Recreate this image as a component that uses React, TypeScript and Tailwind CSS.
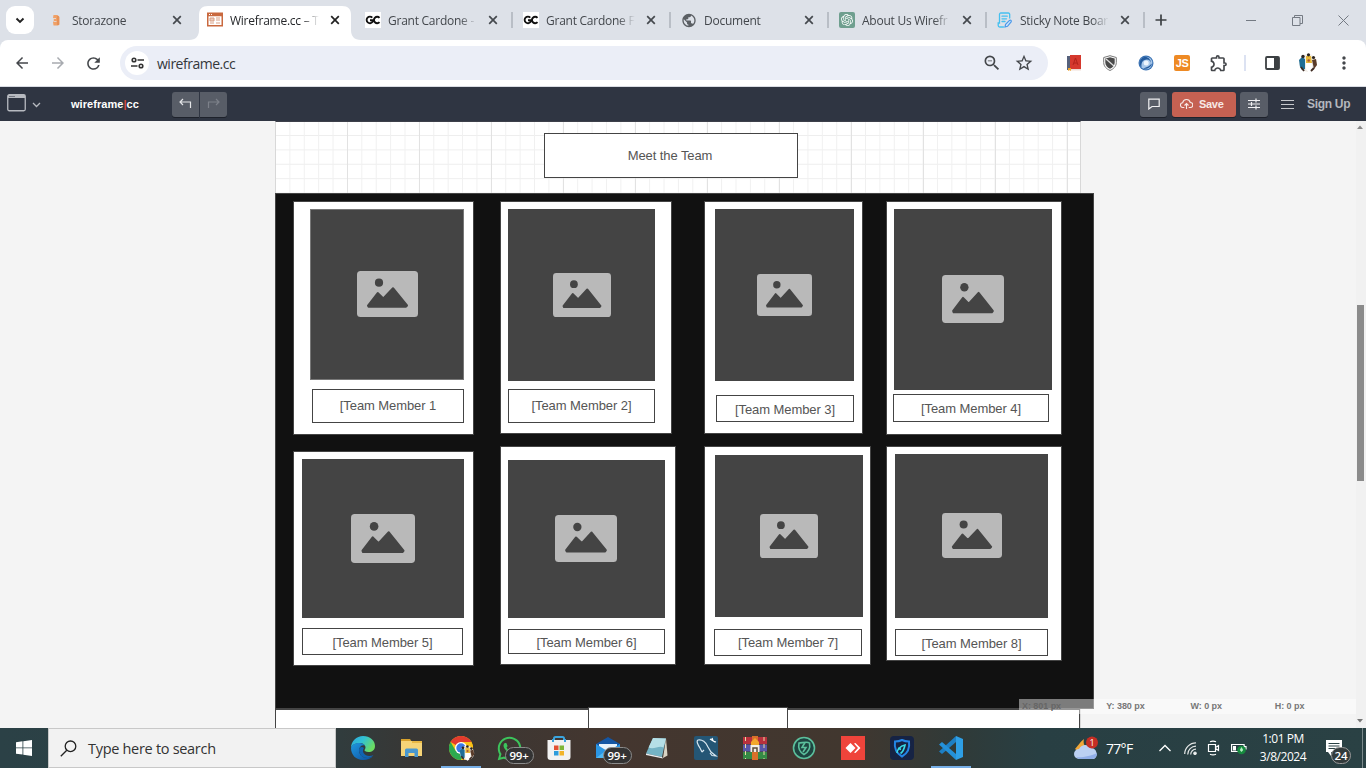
import React from "react";
import { MdArrowBack, MdArrowForward, MdRefresh, MdZoomOut, MdStarBorder, MdOutlineExtension, MdMoreVert, MdPublic } from "react-icons/md";
import { SiOpenai } from "react-icons/si";
import { FaWhatsapp } from "react-icons/fa";

const UI = "font-['Open_Sans','Noto_Sans',sans-serif]";
const ARIAL = "font-['Liberation_Sans',Arial,sans-serif]";

/* ---------- browser tabs ---------- */

function ShopIcon() {
  return (
    <svg width="16" height="16" viewBox="0 0 16 16">
      <path d="M4.500 3h4L10.500 5v7.500l-1.500 1H4.500L4 10l1-2-1-2z" fill="#f0a066" />
      <path d="M4 6.500h3M4.500 9.500h3" stroke="#dfe3e8" strokeWidth=".8" />
      <path d="M9 4v9" stroke="#e0894f" strokeWidth="1.300" />
    </svg>
  );
}

function WireIcon() {
  return (
    <svg width="16" height="16" viewBox="0 0 16 16">
      <rect x=".75" y="1.250" width="14.500" height="12.500" fill="#fff" stroke="#c9693f" strokeWidth="1.500" />
      <path d="M0 3h16" stroke="#c9693f" strokeWidth="2.500" />
      <path d="M2 2.500h1M4 2.500h1" stroke="#fff" />
      <path d="M3 6h4v3H3zM9 6h4M9 8h4M3 11h4M9 11h4" stroke="#d99f84" fill="#eccdbf" />
    </svg>
  );
}

function GcIcon() {
  return (
    <svg width="16" height="16" viewBox="0 0 16 16">
      <rect width="16" height="16" fill="#fff" />
      <path d="M7.300 5.600A3.300 3.300 0 1 0 7.500 10V8.300H5M14.500 5.800a3.200 3.200 0 1 0 0 4.400" fill="none" stroke="#111" strokeWidth="1.900" />
    </svg>
  );
}

function GptIcon() {
  return (
    <span className="flex size-4 items-center justify-center rounded-[2px] bg-[#6f9f8f] text-white">
      <SiOpenai size={12} />
    </span>
  );
}

function NoteIcon() {
  return (
    <svg width="16" height="16" viewBox="0 0 16 16" fill="none" stroke="#45c0f0" strokeWidth="1.300" strokeLinecap="round">
      <path d="M12.700 6V2.300A1.300 1.300 0 0 0 11.400 1H3.800a1.300 1.300 0 0 0-1.300 1.300V11H1.200v2.500A1.500 1.500 0 0 0 2.700 15H6.500" />
      <path d="M5 4.200h5.300M5 6.800h4.500M5 9.500h3" />
      <path d="M8 15l.6-2.700 3.900-3.900c1.200-.8 2.300.3 1.600 1.500L10.500 14.300z" stroke="#4a98ea" fill="#cfe6fb" strokeWidth="1.200" />
    </svg>
  );
}

const TABS = [
  { title: "Storazone", icon: <ShopIcon />, sep: false, active: false },
  { title: "Wireframe.cc – T", icon: <WireIcon />, sep: false, active: true },
  { title: "Grant Cardone -", icon: <GcIcon />, sep: true, active: false },
  { title: "Grant Cardone F", icon: <GcIcon />, sep: true, active: false },
  { title: "Document", icon: <MdPublic size={17} className="text-[#5b5f64]" />, sep: true, active: false },
  { title: "About Us Wirefr", icon: <GptIcon />, sep: true, active: false },
  { title: "Sticky Note Boar", icon: <NoteIcon />, sep: true, active: false },
];

function TabStrip() {
  return (
    <div className="flex h-10 shrink-0 bg-[#dde1e8]">
      <div className="ml-[6px] mt-[6px] flex size-7 items-center justify-center rounded-[9px] bg-white">
        <svg width="10" height="7" viewBox="0 0 10 7" fill="none" stroke="#222" strokeWidth="1.900">
          <path d="M1.500 1.500L5 5l3.500-3.500" />
        </svg>
      </div>
      <div className="ml-[7px] flex">
        {TABS.map((t, i) => (
          <div key={i} className="relative flex h-10 w-[158px] items-center">
            {t.active && (
              <svg className="absolute left-[-10px] top-[6px]" width="172" height="34" viewBox="0 0 172 34">
                <path d="M0 34c7 0 10-4 10-10V9C10 3 13 0 19 0h134c6 0 9 3 9 9v15c0 6 3 10 10 10z" fill="#fff" />
              </svg>
            )}
            <div className="relative flex w-full items-center pl-[8px]">
              <span className="flex w-4 shrink-0 items-center justify-center">{t.icon}</span>
              <span
                className={`${UI} ml-[7px] w-[94px] shrink-0 whitespace-nowrap pt-px text-[12px] leading-4 tracking-[-0.25px] ${t.active ? "text-[#26282b]" : "text-[#43474c]"} [mask-image:linear-gradient(to_right,black_72px,transparent_89px)]`}
              >
                {t.title}
              </span>
              <svg className="ml-[6px] shrink-0" width="10" height="10" viewBox="0 0 10 10" stroke={t.active ? "#222" : "#45494e"} strokeWidth="1.700">
                <path d="M1.200 1.200l7.600 7.600M8.800 1.200L1.200 8.800" />
              </svg>
              {t.sep && <span className="ml-[13px] h-4 w-[1.500px] bg-[#b9bec6]" />}
            </div>
          </div>
        ))}
      </div>
      <svg className="ml-[8px] mt-[14px]" width="12" height="12" viewBox="0 0 12 12" stroke="#3c4043" strokeWidth="1.700">
        <path d="M6 .5v11M.5 6h11" />
      </svg>
      <div className="ml-auto mr-[17px] flex items-center gap-[35px] text-[#747a83]">
        <svg width="11" height="10" viewBox="0 0 11 10" stroke="currentColor"><path d="M0 5.500h10" /></svg>
        <svg width="11" height="11" viewBox="0 0 11 11" stroke="currentColor" fill="none"><path d="M.5 2.500h7.500v8H.5zM2.500 2.500v-2h8v8H8" /></svg>
        <svg width="11" height="11" viewBox="0 0 11 11" stroke="currentColor"><path d="M.5.5l10 10M10.500.5l-10 10" /></svg>
      </div>
    </div>
  );
}

/* ---------- browser toolbar ---------- */

function Avatar({ size }: { size: number }) {
  return (
    <svg width={size} height={size} viewBox="0 0 20 20">
      <rect x="1" y="1" width="18" height="18" rx="9" fill="#f2eee8" />
      <path d="M1 7l3-3 3 2v10l-3 1-2-3z" fill="#1f6e96" />
      <path d="M8 3h5l1 7H8z" fill="#e8b93a" />
      <path d="M14 7l4-1 1 6-3 4z" fill="#5a3c2a" />
      <path d="M8 10h6v5l-3 5-3-4z" fill="#fff" />
      <path d="M3 14l3 4M16 15l-3 3" stroke="#3d2a22" strokeWidth="1.800" />
      <circle cx="5" cy="3.500" r="1.700" fill="#2a2320" />
      <circle cx="10.500" cy="1.800" r="1.600" fill="#2a2320" />
      <circle cx="15.500" cy="4.500" r="1.600" fill="#2a2320" />
      <circle cx="10.700" cy="7.500" r="1.300" fill="#a8563a" />
    </svg>
  );
}

function Toolbar() {
  return (
    <div className="h-[47px] shrink-0 bg-[#dde1e8]">
      <div className="flex h-[47px] items-center rounded-t-[8px] border-b border-[#d9dce3] bg-white text-[#44474b]">
        <div className="flex items-center gap-[18px] pl-[13px]">
          <MdArrowBack size={18} />
          <MdArrowForward size={18} className="text-[#a8abb0]" />
          <MdRefresh size={19} className="ml-[-1px]" />
        </div>
        <div className="ml-[17px] flex h-[34px] w-[928px] items-center rounded-full bg-[#ebeef7] pl-[5px] pr-[14px]">
          <span className="flex size-6 items-center justify-center rounded-full bg-white">
            <svg width="13" height="12" viewBox="0 0 13 12" fill="none" stroke="#333" strokeWidth="1.600">
              <circle cx="3" cy="3" r="1.800" /><path d="M6.500 3H13M0 9h6.500" /><circle cx="10" cy="9" r="1.800" />
            </svg>
          </span>
          <span className={`${UI} ml-2 text-[14px] tracking-[-0.5px] text-[#34373b]`}>wireframe.cc</span>
          <MdZoomOut size={20} className="ml-auto" />
          <MdStarBorder size={20} className="ml-[12px]" />
        </div>
        <div className="ml-[19px] flex items-center">
          <svg width="14" height="16" viewBox="0 0 14 16">
            <path d="M0 1h3v14H0z" fill="#56617b" /><path d="M3 0h11v14H3z" fill="#d5382d" />
            <path d="M2 14h12v1.500H2z" fill="#f0ded6" /><path d="M1 13h3v3l-1.500-1L1 16z" fill="#f1a52a" />
            <path d="M6 10l2.500-7L11 10M7 8h3" stroke="#b2231b" fill="none" />
          </svg>
          <svg className="ml-[22px]" width="14" height="16" viewBox="0 0 14 16">
            <path d="M7 .7l6.300 1.800v5c0 4-3 6.500-6.300 8C3.700 14 .7 11.500.7 7.500v-5z" fill="#fff" stroke="#777" />
            <path d="M7 2.300l4.700 1.200v4c0 3-2 5-4.700 6.200C4.300 12.500 2.300 10.500 2.300 7.500v-4z" fill="#4a4a4a" />
            <path d="M3 4l8 7" stroke="#ddd" strokeWidth="1.300" />
          </svg>
          <svg className="ml-[21px]" width="16" height="16" viewBox="0 0 16 16">
            <circle cx="8" cy="8" r="7.500" fill="#3a72b4" /><circle cx="8" cy="8" r="6.300" fill="#a9c8ea" />
            <path d="M8 1.700A6.300 6.300 0 0 0 3.500 12.500C3 7 5 5 9 4.500a4 4 0 0 1 3 6.500A6.300 6.300 0 0 0 8 1.700z" fill="#245c9f" />
            <path d="M5 13.500c4 1 8-1 9-5-2 2-5 4-9 5z" fill="#245c9f" />
            <circle cx="8.200" cy="8" r="2.500" fill="#eef5fd" />
          </svg>
          <span className={`${ARIAL} ml-[20px] flex size-4 items-center justify-center rounded-[2px] bg-[#ee8a24] text-[11px] font-bold tracking-[-0.5px] text-white`}>JS</span>
          <MdOutlineExtension size={20} className="ml-[19px]" />
          <span className="ml-[15px] h-4 w-[2px] bg-[#dce2f2]" />
          <svg className="ml-[19px]" width="15" height="14" viewBox="0 0 15 14">
            <rect x="1" y="1" width="13" height="12" rx="1" fill="none" stroke="#3c4043" strokeWidth="1.800" /><path d="M9 1h5v12H9z" fill="#3c4043" />
          </svg>
          <span className="ml-[18px]"><Avatar size={20} /></span>
          <MdMoreVert size={20} className="ml-[16px]" />
        </div>
      </div>
    </div>
  );
}

/* ---------- editor bar ---------- */

function EditorBar() {
  const btn = "flex h-[25px] items-center justify-center bg-[#585d67] shadow-[0_1px_0_#1e222b]";
  return (
    <div className={`${ARIAL} flex h-[34px] shrink-0 items-center bg-[#2f3542] font-bold`}>
      <svg className="ml-[7px] mt-[-2px]" width="19" height="18" viewBox="0 0 19 18">
        <rect x=".75" y=".75" width="17.500" height="16" rx="1.500" fill="none" stroke="#b7bac0" strokeWidth="1.300" />
        <path d="M1 1h17v3H1z" fill="#b7bac0" /><path d="M2.500 2.500h1M4.500 2.500h1M6.500 2.500h1" stroke="#2f3542" />
      </svg>
      <svg className="ml-[6px] mt-[2px]" width="9" height="6" viewBox="0 0 9 6" fill="none" stroke="#b7bac0" strokeWidth="1.300"><path d="M1 1l3.500 3.500L8 1" /></svg>
      <span className="ml-[30px] w-[101px] text-[11px] tracking-[0.05px] text-white">wireframe<span className="text-[#d9493d]">|</span>cc</span>
      <div className="flex gap-px">
        <div className={`${btn} w-[27px] rounded-l-[3px]`}>
          <svg width="13" height="12" viewBox="0 0 13 12" fill="none" stroke="#e4e5e8" strokeWidth="1.200"><path d="M4 1L1 4l3 3M1 4h10.500v6" /></svg>
        </div>
        <div className={`${btn} w-[27px] rounded-r-[3px]`}>
          <svg width="13" height="12" viewBox="0 0 13 12" fill="none" stroke="#7d818a" strokeWidth="1.200"><path d="M9 1l3 3-3 3M12 4H1.500v6" /></svg>
        </div>
      </div>
      <div className="ml-auto flex items-center">
        <div className={`${btn} w-[27px] rounded-[3px]`}>
          <svg width="12" height="12" viewBox="0 0 12 12" fill="none" stroke="#f0f0f2" strokeWidth="1.200"><path d="M.8 1.200h10.400v7.300H4L.8 11z" /></svg>
        </div>
        <div className="ml-[5px] flex h-[25px] w-[64px] items-center rounded-[3px] bg-[#c56152] pl-[8px] text-[11px] text-[#f7e9e6] shadow-[0_1px_0_#1e222b]">
          <svg className="shrink-0" width="13" height="12" viewBox="0 0 13 12" fill="none" stroke="currentColor" strokeWidth="1.100"><path d="M4.300 9.500H3A2.400 2.400 0 0 1 2.700 4.700 3.900 3.900 0 0 1 10.300 4.500a2.500 2.500 0 0 1 0 5H8.700M6.500 11V5.500M4.500 7.500l2-2 2 2" /></svg>
          <span className="ml-[6px] tracking-[-0.3px]">Save</span>
        </div>
        <div className={`${btn} ml-[4px] w-[28px] rounded-[3px]`}>
          <svg width="12" height="12" viewBox="0 0 12 12" stroke="#f0f0f2" strokeWidth="1.200"><path d="M0 2.500h12M0 6h12M0 9.500h12M8 .5v4M3.500 4v4M8 7.500v4" /></svg>
        </div>
        <svg className="ml-[13px]" width="13" height="11" viewBox="0 0 13 11" stroke="#c6c8cc" strokeWidth="1.200"><path d="M0 1.500h13M0 5.500h13M0 9.500h13" /></svg>
        <span className="ml-[13px] w-[59px] whitespace-nowrap text-[12px] tracking-[-0.3px] text-[#b4b7bd]">Sign Up</span>
      </div>
    </div>
  );
}

/* ---------- drawing canvas ---------- */

type Box = [left: number, top: number, right: number, bottom: number];

const ORIGIN_Y = 121;
const place = ([l, t, r, b]: Box): React.CSSProperties => ({ left: l, top: t - ORIGIN_Y, width: r - l, height: b - t });

const MEMBERS: { card: Box; photo: Box; icon: Box; label: Box; text: string; edge?: boolean; low?: boolean }[] = [
  { card: [293, 201, 474, 435], photo: [310, 209, 464, 380], icon: [357, 271, 418, 317], label: [312, 389, 464, 423], text: "[Team Member 1", edge: true },
  { card: [500, 201, 672, 434], photo: [508, 209, 655, 381], icon: [553, 273, 611, 317], label: [508, 389, 655, 423], text: "[Team Member 2]" },
  { card: [704, 201, 863, 434], photo: [715, 209, 854, 381], icon: [757, 274, 812, 316], label: [716, 395, 854, 422], text: "[Team Member 3]", low: true },
  { card: [886, 201, 1062, 435], photo: [894, 209, 1052, 390], icon: [942, 275, 1004, 323], label: [893, 394, 1049, 422], text: "[Team Member 4]", low: true },
  { card: [293, 451, 474, 666], photo: [302, 459, 464, 618], icon: [351, 514, 415, 563], label: [302, 628, 463, 655], text: "[Team Member 5]", low: true },
  { card: [500, 446, 676, 665], photo: [508, 460, 665, 618], icon: [555, 515, 617, 562], label: [508, 629, 665, 654], text: "[Team Member 6]", low: true },
  { card: [704, 446, 871, 665], photo: [715, 455, 863, 617], icon: [760, 514, 818, 558], label: [714, 629, 862, 656], text: "[Team Member 7]" },
  { card: [886, 446, 1062, 661], photo: [895, 454, 1048, 618], icon: [942, 513, 1002, 558], label: [895, 629, 1048, 656], text: "[Team Member 8]", low: true },
];

function Canvas() {
  return (
    <div className={`${ARIAL} relative min-h-0 flex-1 overflow-hidden bg-[#f4f4f4] text-[13px] tracking-[-0.08px] text-[#555]`}>
      <div className="absolute bottom-0 left-[275px] top-0 w-[806px] border-x border-t border-x-[#d8d8d8] border-t-[#3d404a] bg-white bg-[linear-gradient(to_right,#e2e2e2_1px,transparent_1px),linear-gradient(to_right,#f0f0f0_1px,transparent_1px),linear-gradient(to_bottom,#eeeeee_1px,transparent_1px)] bg-[length:72px_100%,14.4px_100%,100%_14.4px] bg-[position:-1px_0,-1px_0,0_13px]" />
      <div className="absolute flex items-center justify-center border border-[#444] bg-white pr-[2px]" style={place([544, 133, 798, 178])}>Meet the Team</div>
      <div className="absolute border border-[#444] bg-[#111]" style={place([275, 193, 1094, 709])} />
      {MEMBERS.map((m) => (
        <React.Fragment key={m.text}>
          <div className="absolute border border-[#444] bg-white" style={place(m.card)} />
          <div className={`absolute border bg-[#444] ${m.edge ? "border-[#777]" : "border-[#444]"}`} style={place(m.photo)} />
          <svg className="absolute" style={place(m.icon)} viewBox="0 0 61 46" preserveAspectRatio="none">
            <rect width="61" height="46" rx="3.500" fill="#b9b9b9" />
            <circle cx="22" cy="11.700" r="4.100" fill="#444" />
            <path d="M11 34.500L20.700 22l5.600 5.500L36 17.200l14 17.300-1 1.200H11.500z" fill="#444" stroke="#444" strokeWidth="2" strokeLinejoin="round" />
          </svg>
          <div className={`absolute flex items-center justify-center whitespace-nowrap border border-[#444] bg-white ${m.low ? "pt-[2px]" : ""}`} style={place(m.label)}>{m.text}</div>
        </React.Fragment>
      ))}
      <div className="absolute border-l border-t-2 border-[#444] bg-white" style={place([275, 708, 589, 730])} />
      <div className="absolute border-r border-t-2 border-[#444] bg-white" style={place([787, 708, 1080, 730])} />
      <div className="absolute border-x border-t border-[#444] bg-white" style={place([588, 707, 788, 730])} />
      <div className="absolute grid grid-cols-4 items-center bg-white/45 pl-[3px] text-[9px] font-bold tracking-[-0.05px] text-[#777]" style={place([1019, 699, 1359, 714])}>
        <span className="text-[#666]">X: 801 px</span><span>Y: 380 px</span><span>W: 0 px</span><span>H: 0 px</span>
      </div>
      <div className="absolute bottom-0 right-0 top-0 flex w-[10px] flex-col items-center bg-[#f1f1f1]">
        <svg className="ml-[-2px] mt-[4px]" width="6" height="4" viewBox="0 0 6 4"><path d="M0 4l3-3.500L6 4z" fill="#888" /></svg>
        <div className="ml-[-1px] mt-[176px] h-[176px] w-[7px] bg-[#8b8b8b]" />
        <svg className="mb-[5px] ml-[-2px] mt-auto" width="6" height="4" viewBox="0 0 6 4"><path d="M0 0l3 3.500L6 0z" fill="#777" /></svg>
      </div>
    </div>
  );
}

/* ---------- taskbar ---------- */

function Badge({ text }: { text: string }) {
  return (
    <span className={`${UI} absolute left-[7px] top-[8px] flex h-[17px] w-[29px] items-center justify-center rounded-full border border-[#8b8b8b] bg-[#333333] text-[11.500px] font-semibold tracking-[-0.3px] text-white`}>
      {text}
    </span>
  );
}

function EdgeIcon() {
  return (
    <svg width="24" height="24" viewBox="0 0 24 24">
      <defs>
        <linearGradient id="edgeTop" x1="0" y1="0" x2="1" y2=".5"><stop offset="0" stopColor="#2ba6dc" /><stop offset=".5" stopColor="#32c2d4" /><stop offset="1" stopColor="#6bdc62" /></linearGradient>
        <linearGradient id="edgeLow" x1="0" y1="0" x2="1" y2="1"><stop offset="0" stopColor="#1f98e0" /><stop offset="1" stopColor="#0d4f9e" /></linearGradient>
      </defs>
      <path d="M0 12C0 5 5.500 0 12 0c7 0 12 4.500 12 10 0 4-3 6-6.500 6-3 0-4-1-4-1.700 0-.8 1-1.200 1-3C14.500 9 12 7 8.500 7 4 7 .5 9.500 0 12z" fill="url(#edgeTop)" />
      <path d="M0 12c.5-3 4-5 8.500-5 2.500 0 4.500 1 5.500 2.500-3-1-6 1-6 5 0 4 3.500 7.500 8.500 7.500 2 0 4-1 5.500-2-2 2.500-5.500 4-10 4C5 24 0 19 0 12z" fill="url(#edgeLow)" />
      <path d="M8 14c0 5 4 8 8.500 8 2 0 4.500-1 6-3-3 1.500-8 1.500-10-2-1-2-.5-4 .5-5-2-2-5-1-5 2z" fill="#1064b2" />
    </svg>
  );
}

const APPS: { icon: React.ReactNode; badge?: string; on?: boolean }[] = [
  { icon: <EdgeIcon /> },
  {
    icon: (
      <svg width="24" height="22" viewBox="0 0 24 22">
        <path d="M1 2h9l2 3H1z" fill="#d9a22c" /><path d="M1 4h21v15H1z" fill="#f6d477" /><path d="M12 4h10v2H12z" fill="#e9b844" />
        <path d="M5 20v-7a1.500 1.500 0 0 1 1.500-1.500h10A1.500 1.500 0 0 1 18 13v7h-3.500v-4h-6v4z" fill="#4a98cf" />
      </svg>
    ),
  },
  {
    on: true,
    icon: (
      <span className="relative block size-6">
        <svg width="24" height="24" viewBox="0 0 24 24">
          <circle cx="12" cy="12" r="12" fill="#fbc116" />
          <path d="M12 12L1.600 6A12 12 0 0 1 22.400 6z" fill="#e33b2e" /><path d="M1.600 6A12 12 0 0 0 12 24l5-9-5-3L6.800 15z" fill="#2da94f" />
          <path d="M12 6h10.400A12 12 0 0 1 12 24l5-9z" fill="#fbc116" /><circle cx="12" cy="12" r="6" fill="#fff" /><circle cx="12" cy="12" r="4.700" fill="#3c79e6" />
        </svg>
        <span className="absolute left-[10px] top-[9px]"><Avatar size={16} /></span>
      </span>
    ),
  },
  { icon: <FaWhatsapp size={27} color="#3cc45c" className="shrink-0" />, badge: "99+" },
  {
    icon: (
      <svg width="24" height="24" viewBox="0 0 24 24">
        <path d="M7 6V2.500A1.500 1.500 0 0 1 8.500 1h7A1.500 1.500 0 0 1 17 2.500V6" fill="none" stroke="#3ba4dd" strokeWidth="2" />
        <path d="M0.500 4h23v17a3 3 0 0 1-3 3h-17a3 3 0 0 1-3-3z" fill="#f2f2f2" /><path d="M6 3v3M18 3v3" stroke="#3ba4dd" strokeWidth="2" />
        <path d="M7 9.500h4.500V14H7z" fill="#e25133" /><path d="M12.500 9.500H17V14h-4.500z" fill="#7fb636" /><path d="M7 15h4.500v4.500H7z" fill="#2e9cdc" /><path d="M12.500 15H17v4.500h-4.500z" fill="#f2b429" />
      </svg>
    ),
  },
  {
    badge: "99+",
    icon: (
      <svg width="24" height="24" viewBox="0 0 24 24">
        <path d="M0 8L12 1l12 7v4H0z" fill="#1456a4" /><path d="M3 8h18v8H3z" fill="#e7f2fb" /><path d="M0 8l12 7.500L24 8v14H0z" fill="#2b96e4" /><path d="M0 22l12-9 4 3-3 6z" fill="#4fb7f2" />
      </svg>
    ),
  },
  {
    icon: (
      <svg width="24" height="24" viewBox="0 0 24 24">
        <path d="M8 2l13 .5L17 21 1 17.500z" fill="#74b3c4" /><path d="M8 2l13 .5-2.500 9C14 9 9 14 3.500 11.500z" fill="#b5dfe6" /><path d="M21 2.500l1.500 17-4.500 2.500z" fill="#d9d4c4" /><path d="M1 17.500L17 21l1 1.500L1 19z" fill="#e9eef0" />
      </svg>
    ),
  },
  {
    icon: (
      <svg width="24" height="24" viewBox="0 0 24 24">
        <rect width="24" height="24" rx="2" fill="#245675" />
        <path d="M8 16l-2-4C4 9 2 5 4 4c4-1 8 2 10 7l3 5 5 4-4-.5-2-2.500M8 16l2-2" fill="none" stroke="#d8e6ef" strokeWidth="1.200" />
        <path d="M16 3l5 3M18 2l1 3 3 1" stroke="#fff" strokeWidth="1.300" fill="none" />
      </svg>
    ),
  },
  {
    icon: (
      <svg width="24" height="24" viewBox="0 0 24 24">
        <path d="M0 1h24v7H0z" fill="#b8303d" /><path d="M0 8.500h24v7H0z" fill="#5a56a8" /><path d="M0 16h24v7H0z" fill="#358a45" />
        <path d="M2.500 1v22M21 1v22" stroke="#e9d9a4" strokeWidth="1" strokeDasharray="4 3" /><path d="M9 0h6v24H9z" fill="#d9702a" />
        <path d="M8 6l4-4 4 4v4H8z" fill="#f3a72c" /><path d="M7.500 9h9v7h-9z" fill="#f4f0e6" /><path d="M10 16v-4h4v4" fill="none" stroke="#5b4a3a" strokeWidth="1.500" />
      </svg>
    ),
  },
  {
    icon: (
      <svg width="24" height="24" viewBox="0 0 24 24" fill="none" stroke="#5bbf9c" strokeWidth="1.600">
        <circle cx="12" cy="12" r="10.500" fill="#1e4440" /><path d="M7 7c3 0 8-2 10.500 0 1 5-1 9-5.500 11.500C7.500 16 6 12 7 7z" /><path d="M13 6.500l-3 5h4l-3 4.500" />
      </svg>
    ),
  },
  {
    icon: (
      <svg width="24" height="24" viewBox="0 0 24 24">
        <rect width="24" height="24" fill="#ef443b" /><path d="M9.500 7l5 5-5 5-5-5z" fill="#fff" /><path d="M13 7.500l1.500-.5 5 5-5 5-1.500-.5L17 12z" fill="#fff" />
      </svg>
    ),
  },
  {
    icon: (
      <svg width="24" height="24" viewBox="0 0 24 24">
        <rect width="24" height="24" rx="4" fill="#162344" /><path d="M12 4c2 1 4.500 1.500 7 1.500 1 7-1.500 12-7 15-5.500-3-8-8-7-15C7.500 5.500 10 5 12 4z" fill="none" stroke="#2486e6" strokeWidth="2" />
        <path d="M7 17c0-3 3-7 8-8-1 5-2.500 7-4.500 8.500M8 12l3 1.500" fill="none" stroke="#39dce5" strokeWidth="1.600" />
      </svg>
    ),
  },
  {
    on: true,
    icon: (
      <svg width="24" height="24" viewBox="0 0 24 24">
        <path d="M17 0l7 3v18l-7 3z" fill="#2e9fe6" /><path d="M17 0v6L3 18l-3-2.500z" fill="#1d7fc4" /><path d="M17 24v-6L3 6 0 8.500z" fill="#2490d8" />
      </svg>
    ),
  },
];

function Taskbar() {
  return (
    <div className={`${UI} flex h-10 shrink-0 bg-[linear-gradient(to_right,#2b4146_0%,#2d3f42_22%,#383735_30%,#44362f_45%,#41372f_62%,#303a38_70%,#283f43_76%,#2a4144_100%)] text-white`}>
      <div className="flex w-12 items-center justify-center">
        <svg width="16" height="16" viewBox="0 0 16 16" fill="#fff"><path d="M0 2.200L6.500 1.300v6.200H0zM7.300 1.200L16 0v7.500H7.300zM0 8.300h6.500v6.300L0 13.700zM7.300 8.300H16V16l-8.700-1.200z" /></svg>
      </div>
      <div className="flex w-[288px] items-center border border-[#c8c8c8] bg-[#f2f2f2] pl-[11px] text-[#333]">
        <svg width="17" height="17" viewBox="0 0 17 17" fill="none" stroke="#222" strokeWidth="1.300"><circle cx="10.500" cy="6.300" r="5.300" /><path d="M6.800 10.200L.8 16.200" /></svg>
        <span className="ml-[11px] pt-px text-[14.500px] tracking-[-0.3px]">Type here to search</span>
      </div>
      <div className="ml-[2px] flex">
        {APPS.map((a, i) => (
          <div key={i} className="relative flex h-10 w-[49px] items-center justify-center">
            <div className="relative flex size-6 items-center justify-center">
              {a.icon}
              {a.badge && <span className="absolute left-0 top-[3px]"><Badge text={a.badge} /></span>}
            </div>
            {a.on && <span className="absolute bottom-0 left-[5px] h-[2px] w-[40px] bg-[#76aee6]" />}
          </div>
        ))}
      </div>
      <div className="ml-auto flex items-center">
        <svg width="26" height="25" viewBox="0 0 26 25">
          <path d="M11 3c-4 3-7 8-9 10 3 3 10 2 12-2-3-1-4-4-3-8z" fill="#f0a637" />
          <path d="M6 23a5 5 0 0 1 0-10 7 7 0 0 1 12-1 6 6 0 0 1 3 11z" fill="#bcd0f2" /><path d="M3 21c5 1 15-1 21-4 0 4-3 6-5 6H6z" fill="#91aee8" />
          <circle cx="19" cy="6.500" r="6" fill="#c52e24" /><text x="19" y="10" fontSize="9" textAnchor="middle" fill="#fff">1</text>
        </svg>
        <span className="ml-[7px] w-[30px] whitespace-nowrap text-[14px] tracking-[-0.7px]">77°F</span>
        <svg className="ml-[23px]" width="12" height="8" viewBox="0 0 12 8" fill="none" stroke="#fff" strokeWidth="1.300"><path d="M.5 7L6 1.500 11.500 7" /></svg>
        <svg className="ml-[13px]" width="13" height="13" viewBox="0 0 13 13" fill="none" stroke="#e3e6e6" strokeWidth="1.200">
          <path d="M.7 12A11.300 11.300 0 0 1 12 .8M3.700 12.500A8.300 8.300 0 0 1 12 4.200M6.700 12.500A5.300 5.300 0 0 1 12 7.200" /><circle cx="11" cy="11.300" r="1.200" fill="#fff" />
        </svg>
        <svg className="ml-[10px]" width="13" height="16" viewBox="0 0 13 16" fill="none" stroke="#fff" strokeWidth="1.200"><path d="M1.500 4.500h7v7h-7zM8.500 7.500l3-2v5l-3-2M3 1.800q3-1.500 6 0M3 14.200q3 1.500 6 0" /></svg>
        <svg className="ml-[11px]" width="16" height="14" viewBox="0 0 16 14"><path d="M.6 3.500h12.500v7H.6zM13.500 5.500h1.500v3" fill="none" stroke="#fff" strokeWidth="1.200" /><path d="M2 5h3v4.500H2z" fill="#fff" /><circle cx="10.500" cy="9" r="4.300" fill="#168a3e" /><path d="M10.500 6l1.700 3-1.700 2L8.800 9z" fill="#b7edc4" /></svg>
        <div className="ml-[9px] flex w-[54px] flex-col items-center whitespace-nowrap text-[12px] leading-[18px] tracking-[-0.45px]">
          <span>1:01 PM</span><span>3/8/2024</span>
        </div>
        <div className="relative ml-[16px] h-10 w-[40px]">
          <svg className="absolute left-0 top-[12px]" width="16" height="16" viewBox="0 0 16 16"><path d="M0 0h16v12H5v4l-3-4H0z" fill="#fff" /><path d="M2.500 3.500h11M2.500 6h11M2.500 8.500h7" stroke="#2a4144" strokeWidth="1" /></svg>
          <span className="absolute left-[5px] top-[19px] flex h-[17px] w-5 items-center justify-center rounded-full border border-[#999] bg-[#333b3c] text-[11.500px] font-semibold">24</span>
          <span className="absolute right-[3px] top-0 h-10 w-px bg-[#7b898b]" />
        </div>
      </div>
    </div>
  );
}

export default function App() {
  return (
    <div className="flex h-[768px] w-[1366px] flex-col overflow-hidden">
      <TabStrip />
      <Toolbar />
      <EditorBar />
      <Canvas />
      <Taskbar />
    </div>
  );
}
